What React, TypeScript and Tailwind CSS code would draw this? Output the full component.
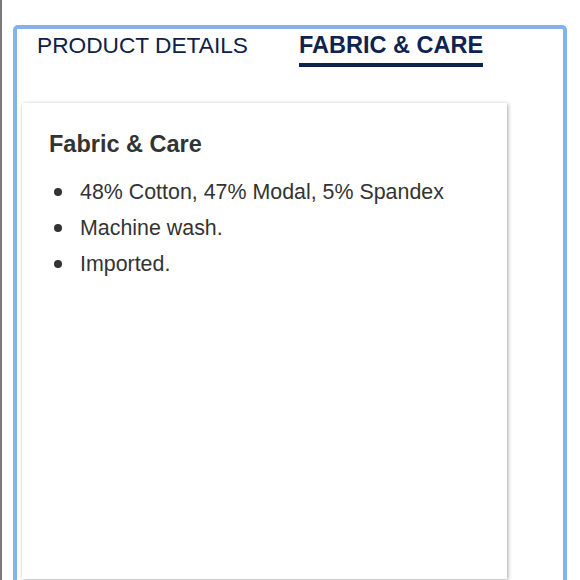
export default function App() {
  const items = ["48% Cotton, 47% Modal, 5% Spandex", "Machine wash.", "Imported."];
  return (
    <div
      className="w-[580px] h-[580px] bg-white overflow-hidden relative border-l-2 border-[#7a7a7a]"
      style={{ fontFamily: '"Liberation Sans", Arial, sans-serif' }}
    >
      <div className="ml-[11px] mt-[25px] w-[554px] h-[600px] border-4 border-b-0 border-[#82b3ea] rounded-t-[5px] bg-white">
        <div className="flex pt-[3px] h-[74px]">
          <div className="ml-[20px] w-[262px] text-[22.7px] leading-[27.6px] text-[#0e2147]">
            PRODUCT DETAILS
          </div>
          <div className="pb-[3px] border-b-4 border-[#0e2350] h-[35px] text-[23.5px] leading-[27.6px] font-bold text-[#0e2350]">
            FABRIC &amp; CARE
          </div>
        </div>
        <div className="ml-[5px] w-[485px] h-[476px] bg-white shadow-[1px_1px_4px_rgba(0,0,0,0.35)] pl-[27px] pt-[28px]">
          <div className="text-[23.5px] leading-[27.6px] font-bold text-[#333333]">Fabric &amp; Care</div>
          <ul className="mt-[15px]">
            {items.map((t) => (
              <li key={t} className="flex items-center h-[36px] text-[21.4px] text-[#333333]">
                <span className="shrink-0 w-[8px] h-[8px] rounded-full bg-[#333333] ml-[5px] mr-[18px]" />
                <span>{t}</span>
              </li>
            ))}
          </ul>
        </div>
      </div>
    </div>
  );
}
